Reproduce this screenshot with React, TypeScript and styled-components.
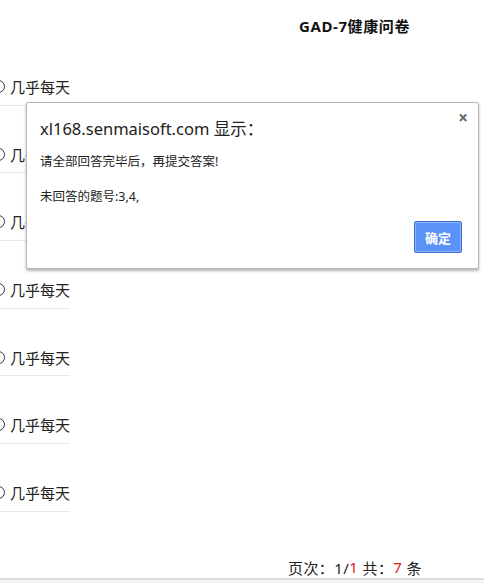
import React from "react";
import styled, { createGlobalStyle } from "styled-components";

const Global = createGlobalStyle`
  html, body { margin: 0; padding: 0; background: #fff; }
  body { font-family: "Noto Sans", "Noto Sans CJK SC", sans-serif; color: #222; }
`;

const Page = styled.div`
  position: relative;
  width: 484px;
  height: 583px;
  overflow: hidden;
  background: #fff;
  display: flex;
  flex-direction: column;
`;

const Header = styled.div`
  height: 38px;
  display: flex;
  justify-content: flex-end;
  align-items: center;
  padding-right: 74px;
  padding-top: 12px;
  box-sizing: border-box;
`;

const Title = styled.h1`
  margin: 0;
  font-size: 15px;
  letter-spacing: 0.6px;
  font-weight: bold;
  color: #111;
  font-family: "Noto Sans", "Noto Sans CJK SC", sans-serif;
`;

const List = styled.div`
  display: flex;
  flex-direction: column;
`;

const Row = styled.div`
  height: 67.67px;
  display: flex;
  align-items: flex-end;
`;

const Option = styled.label`
  width: 70px;
  height: 36px;
  border-bottom: 1px solid #e6e6ee;
  display: flex;
  align-items: center;
  gap: 5px;
  font-size: 15px;
  color: #222;
  white-space: nowrap;
`;

const Radio = styled.span`
  flex: none;
  width: 11px;
  height: 11px;
  margin-left: -8px;
  border: 1.5px solid #333;
  border-radius: 50%;
`;

const Footer = styled.div`
  margin-top: auto;
  display: flex;
  justify-content: flex-end;
  padding-right: 62px;
  height: 20px;
  align-items: center;
  font-size: 15px;
  letter-spacing: 0.4px;
  color: #222;
`;

const Red = styled.span`
  color: #e8141b;
`;

const BottomBar = styled.div`
  margin-top: 1px;
  height: 5px;
  box-sizing: border-box;
  border-top: 2px solid #dcdcdc;
  background: #f4f4f4;
`;

const Dialog = styled.div`
  position: absolute;
  left: 26px;
  top: 102px;
  width: 453px;
  height: 167px;
  box-sizing: border-box;
  background: #fff;
  border: 1px solid #b8b8b8;
  border-radius: 2px;
  box-shadow: 0 2px 3px rgba(0, 0, 0, 0.3);
  padding: 14px 16px 0 13px;
  display: flex;
  flex-direction: column;
`;

const DialogTitle = styled.div`
  font-size: 16.5px;
  color: #222;
  line-height: 24px;
`;

const Close = styled.span`
  position: absolute;
  right: 10px;
  top: 3px;
  font-size: 17px;
  font-weight: bold;
  color: #666;
`;

const Message = styled.div<{ $gap: number }>`
  margin-top: ${(p) => p.$gap}px;
  font-size: 12.5px;
  color: #222;
  line-height: 18px;
`;

const Actions = styled.div`
  margin-top: auto;
  margin-bottom: 15px;
  display: flex;
  justify-content: flex-end;
`;

const OkButton = styled.button`
  width: 48px;
  height: 32px;
  background: #5b92f8;
  border: 1px solid #3d6fd6;
  box-shadow: inset 0 0 0 1px #8db3fb;
  border-radius: 2px;
  color: #fff;
  font-weight: bold;
  font-size: 13px;
  font-family: "Noto Sans", "Noto Sans CJK SC", sans-serif;
  padding: 0;
`;

export default function App() {
  const rows = Array.from({ length: 7 });
  return (
    <>
      <Global />
      <Page>
        <Header>
          <Title>GAD-7健康问卷</Title>
        </Header>
        <List>
          {rows.map((_, i) => (
            <Row key={i}>
              <Option>
                <Radio />
                几乎每天
              </Option>
            </Row>
          ))}
        </List>
        <Footer>
          页次：1/<Red>1</Red>&nbsp;共：<Red>7</Red>&nbsp;条
        </Footer>
        <BottomBar />
        <Dialog>
          <Close>×</Close>
          <DialogTitle>xl168.senmaisoft.com 显示：</DialogTitle>
          <Message $gap={12}>请全部回答完毕后，再提交答案!</Message>
          <Message $gap={17}>未回答的题号:3,4,</Message>
          <Actions>
            <OkButton>确定</OkButton>
          </Actions>
        </Dialog>
      </Page>
    </>
  );
}
